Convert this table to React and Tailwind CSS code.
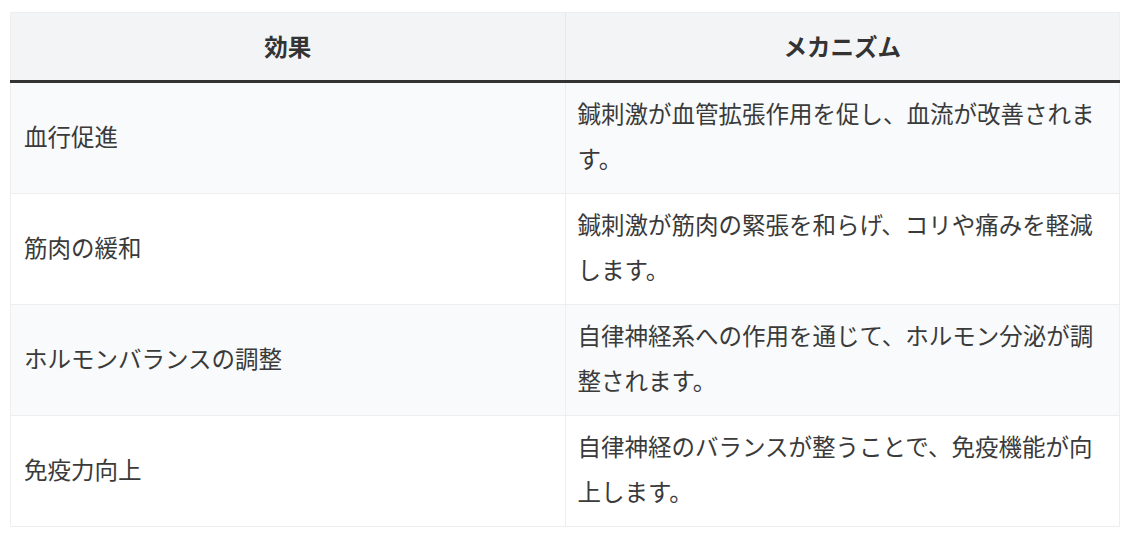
const rows = [
  { effect: '血行促進', mechanism: '鍼刺激が血管拡張作用を促し、血流が改善されます。' },
  { effect: '筋肉の緩和', mechanism: '鍼刺激が筋肉の緊張を和らげ、コリや痛みを軽減します。' },
  { effect: 'ホルモンバランスの調整', mechanism: '自律神経系への作用を通じて、ホルモン分泌が調整されます。' },
  { effect: '免疫力向上', mechanism: '自律神経のバランスが整うことで、免疫機能が向上します。' },
];

export default function App() {
  return (
    <div className="min-h-[539px] bg-white pt-[12px] pl-[10px] font-['Noto_Sans_CJK_JP','Noto_Sans',sans-serif] text-[#333]">
      <table className="w-[1110px] table-fixed border-collapse border border-[#eeeeee] text-[23.5px] leading-[45px]">
        <thead>
          <tr className="bg-[#f3f4f6] border-b-[3px] border-b-[#333]">
            <th className="w-1/2 border-r border-[#e8e8e8] py-[11px] text-center font-bold">効果</th>
            <th className="w-1/2 py-[11px] text-center font-bold">メカニズム</th>
          </tr>
        </thead>
        <tbody>
          {rows.map((row, i) => (
            <tr key={row.effect} className={`border-b border-[#eeeeee] ${i % 2 === 0 ? 'bg-[#f9fafb]' : 'bg-white'}`}>
              <td className="border-r border-[#eeeeee] px-[13px] pt-[8px] pb-[12px] align-middle font-normal text-[#3a3a3a]">{row.effect}</td>
              <td className="px-[12px] pt-[8px] pb-[12px] align-middle font-normal text-[#3a3a3a]">{row.mechanism}</td>
            </tr>
          ))}
        </tbody>
      </table>
    </div>
  );
}
